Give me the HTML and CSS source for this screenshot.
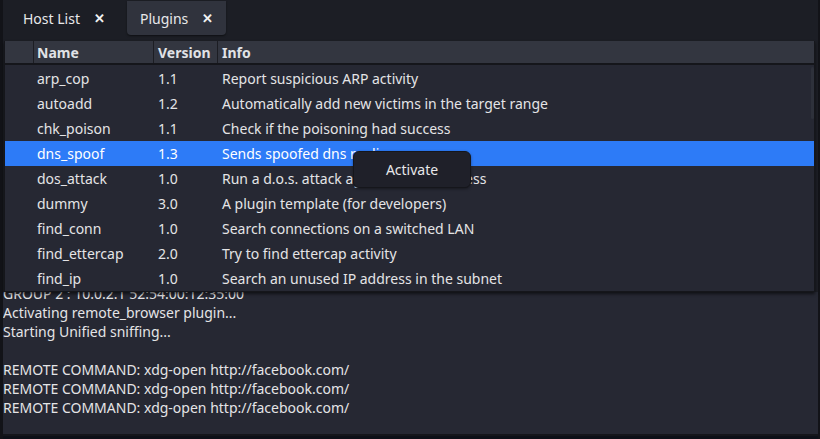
FILE: index.html
```html
<!DOCTYPE html>
<html>
<head>
<meta charset="utf-8">
<link rel="stylesheet" href="styles.css">
</head>
<body>
<div class="window">
  <div class="tabbar">
    <div class="tab">Host List<span class="close">✕</span></div>
    <div class="tab active">Plugins<span class="close">✕</span></div>
  </div>
  <div class="main">
    <div class="log">
      <div class="log-text">
        <div>GROUP 2 : 10.0.2.1 52:54:00:12:35:00</div>
        <div>Activating remote_browser plugin...</div>
        <div>Starting Unified sniffing...</div>
        <div>&nbsp;</div>
        <div>REMOTE COMMAND: xdg-open http://facebook.com/</div>
        <div>REMOTE COMMAND: xdg-open http://facebook.com/</div>
        <div>REMOTE COMMAND: xdg-open http://facebook.com/</div>
      </div>
    </div>
    <div class="plugins">
      <div class="row head">
        <div class="c0"></div>
        <div class="c1">Name</div>
        <div class="c2">Version</div>
        <div class="c3">Info</div>
      </div>
      <div class="body">
        <div class="row"><div class="c0"></div><div class="c1">arp_cop</div><div class="c2">1.1</div><div class="c3">Report suspicious ARP activity</div></div>
        <div class="row"><div class="c0"></div><div class="c1">autoadd</div><div class="c2">1.2</div><div class="c3">Automatically add new victims in the target range</div></div>
        <div class="row"><div class="c0"></div><div class="c1">chk_poison</div><div class="c2">1.1</div><div class="c3">Check if the poisoning had success</div></div>
        <div class="row sel"><div class="c0"></div><div class="c1">dns_spoof</div><div class="c2">1.3</div><div class="c3">Sends spoofed dns replies</div></div>
        <div class="row"><div class="c0"></div><div class="c1">dos_attack</div><div class="c2">1.0</div><div class="c3">Run a d.o.s. attack against an IP address</div></div>
        <div class="row"><div class="c0"></div><div class="c1">dummy</div><div class="c2">3.0</div><div class="c3">A plugin template (for developers)</div></div>
        <div class="row"><div class="c0"></div><div class="c1">find_conn</div><div class="c2">1.0</div><div class="c3">Search connections on a switched LAN</div></div>
        <div class="row"><div class="c0"></div><div class="c1">find_ettercap</div><div class="c2">2.0</div><div class="c3">Try to find ettercap activity</div></div>
        <div class="row"><div class="c0"></div><div class="c1">find_ip</div><div class="c2">1.0</div><div class="c3">Search an unused IP address in the subnet</div></div>
        <div class="scroll"></div>
      </div>
      <div class="menu">Activate</div>
    </div>
  </div>
  <div class="desk"></div>
</div>
</body>
</html>
```
FILE: styles.css
```css
* { box-sizing: border-box; }
html, body { margin: 0; padding: 0; }
body {
  width: 820px;
  height: 439px;
  overflow: hidden;
  background: #1c1e25;
  font-family: "Noto Sans", "Open Sans", sans-serif;
  font-size: 14px;
  color: #e4e4e6;
}
.window {
  height: 439px;
  display: flex;
  flex-direction: column;
  border-left: 3px solid #121318;
  border-right: 2px solid #121318;
}
.tabbar {
  height: 41px;
  display: flex;
  align-items: flex-start;
  padding-top: 1px;
  padding-left: 7px;
  gap: 9px;
}
.tab {
  height: 34px;
  display: flex;
  align-items: center;
  padding: 0 13px 0 13px;
  color: #e8e8ea;
  border-radius: 0 0 4px 4px;
}
.tab.active {
  background: #30333d;
  box-shadow: 0 1px 2px rgba(0,0,0,0.5);
}
.close {
  margin-left: 14px;
  font-size: 13px;
  font-weight: bold;
  color: #f2f2f2;
}
.main {
  position: relative;
  flex: 0 0 auto;
  height: 395px;
}
.plugins {
  position: absolute;
  left: 1px;
  right: 3px;
  top: 0;
  height: 251px;
  background: #262833;
  border: 1px solid #15161b;
  border-top: none;
  box-shadow: 0 2px 3px rgba(0,0,0,0.6);
}
.row {
  display: flex;
  height: 25px;
  align-items: center;
}
.head {
  height: 24px;
  background: #333640;
  border-bottom: 2px solid #15161b;
  font-weight: bold;
  color: #e0e2e6;
}
.head > div {
  height: 100%;
  display: flex;
  align-items: center;
  border-right: 1px solid #1c1d23;
}
.head .c3 { border-right: none; }
.c0 { width: 29px; flex: none; }
.c1 { width: 120px; flex: none; padding-left: 3px; }
.c2 { width: 64px; flex: none; padding-left: 4px; }
.c3 { flex: 1; padding-left: 4px; white-space: nowrap; }
.body { position: relative; padding-top: 1px; }
.row.sel { background: #2d7bf7; color: #fff; }
.scroll {
  position: absolute;
  right: 0;
  top: 2px;
  width: 3px;
  height: 52px;
  background: #2e313b;
  border-radius: 2px;
}
.menu {
  position: absolute;
  left: 348px;
  top: 110px;
  width: 118px;
  height: 37px;
  background: #1f2029;
  border: 1px solid #15161b;
  border-radius: 6px;
  display: flex;
  align-items: center;
  justify-content: center;
  color: #e8e8ea;
  box-shadow: 0 1px 3px rgba(0,0,0,0.4);
}
.log {
  position: absolute;
  left: 0;
  right: 0;
  top: 251px;
  height: 144px;
  background: #262833;
  border-bottom: 2px solid #15161b;
  overflow: hidden;
}
.log-text {
  margin-top: -8px;
  line-height: 19px;
  white-space: nowrap;
}
.desk {
  flex: 1;
  background: #0d1018;
}
```
